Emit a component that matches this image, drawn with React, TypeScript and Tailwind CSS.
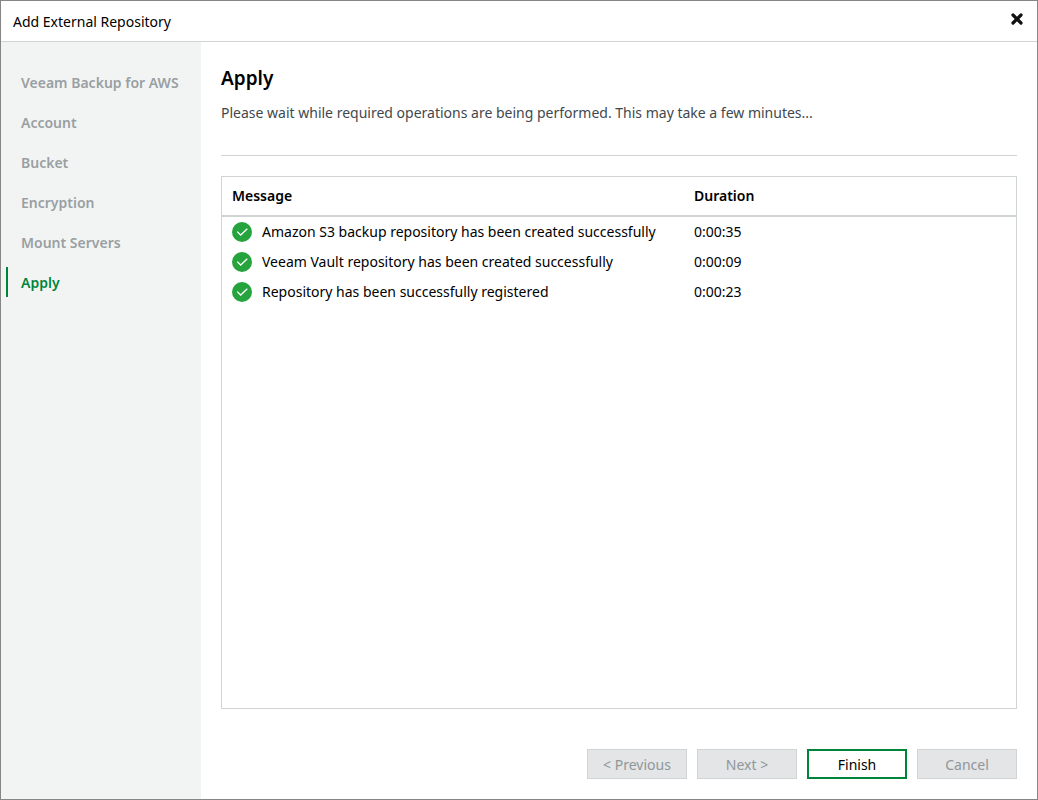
import { useState } from 'react';

type Operation = {
  message: string;
  duration: string;
};

const steps = ['Veeam Backup for AWS', 'Account', 'Bucket', 'Encryption', 'Mount Servers', 'Apply'];

const operations: Operation[] = [
  { message: 'Amazon S3 backup repository has been created successfully', duration: '0:00:35' },
  { message: 'Veeam Vault repository has been created successfully', duration: '0:00:09' },
  { message: 'Repository has been successfully registered', duration: '0:00:23' },
];

function SuccessIcon() {
  return (
    <svg className="size-5 shrink-0" viewBox="0 0 20 20" fill="none" aria-hidden="true">
      <circle cx="10" cy="10" r="10" fill="#25a33c" />
      <path d="M5.2 9.6 8.7 13 15.3 6.7" stroke="#fff" strokeWidth="1.3" />
    </svg>
  );
}

function CloseIcon() {
  return (
    <svg className="size-3" viewBox="0 0 12 12" fill="none" aria-hidden="true">
      <path d="M2 2 10 10M10 2 2 10" stroke="#111" strokeWidth="3.2" strokeLinecap="round" />
    </svg>
  );
}

export default function App() {
  const [current] = useState('Apply');
  const disabledButton = 'h-[30px] w-[100px] border border-[#d0d4d5] bg-[#e3e5e6] pt-0.5 text-[#8f979b]';

  return (
    <div className="flex min-h-screen flex-col border border-[#868686] bg-white font-['Noto_Sans','Open_Sans',sans-serif] text-sm text-black">
      <header className="flex h-[41px] items-center justify-between border-b border-[#d0d4d4] px-3">
        <h1 className="pt-0.5">Add External Repository</h1>
        <button type="button" aria-label="Close" className="-mt-1 mr-0.5">
          <CloseIcon />
        </button>
      </header>

      <div className="flex flex-1">
        <nav className="w-[200px] shrink-0 bg-[#f2f4f4] pt-[25px]">
          <ul className="space-y-2.5">
            {steps.map((step) => (
              <li key={step} className="pl-[5px]">
                <a
                  href="#"
                  aria-current={step === current ? 'step' : undefined}
                  className={`flex h-[30px] items-center border-l-2 pt-0.5 pl-[13px] font-semibold whitespace-nowrap ${
                    step === current
                      ? 'border-[#00843a] text-[#00843a]'
                      : 'border-transparent text-[#999fa2]'
                  }`}
                >
                  {step}
                </a>
              </li>
            ))}
          </ul>
        </nav>

        <main className="flex min-w-0 flex-1 flex-col p-5">
          <h2 className="mt-1 text-[19px] leading-6 font-semibold">Apply</h2>
          <p className="mt-3 border-b border-[#d0d4d4] pb-8 leading-[21px] text-[#3f484d]">
            Please wait while required operations are being performed. This may take a few minutes...
          </p>

          <div className="mt-5 flex-1 border border-[#d0d4d4]">
            <table className="w-full table-fixed border-separate border-spacing-0 text-left">
              <thead>
                <tr>
                  <th className="h-10 w-[462px] border-b-2 border-[#d0d4d4] pl-2.5 font-semibold">Message</th>
                  <th className="h-10 border-b-2 border-[#d0d4d4] pl-2.5 font-semibold">Duration</th>
                </tr>
              </thead>
              <tbody>
                {operations.map((op) => (
                  <tr key={op.message} className="h-[30px]">
                    <td className="pl-2.5">
                      <div className="flex items-center gap-2.5">
                        <SuccessIcon />
                        {op.message}
                      </div>
                    </td>
                    <td className="pl-2.5">{op.duration}</td>
                  </tr>
                ))}
              </tbody>
            </table>
          </div>

          <footer className="mt-10 flex justify-end gap-2.5">
            <button type="button" disabled className={disabledButton}>
              &lt; Previous
            </button>
            <button type="button" disabled className={disabledButton}>
              Next &gt;
            </button>
            <button type="button" className="h-[30px] w-[100px] border-2 border-[#00843a] bg-white pt-0.5">
              Finish
            </button>
            <button type="button" disabled className={disabledButton}>
              Cancel
            </button>
          </footer>
        </main>
      </div>
    </div>
  );
}
